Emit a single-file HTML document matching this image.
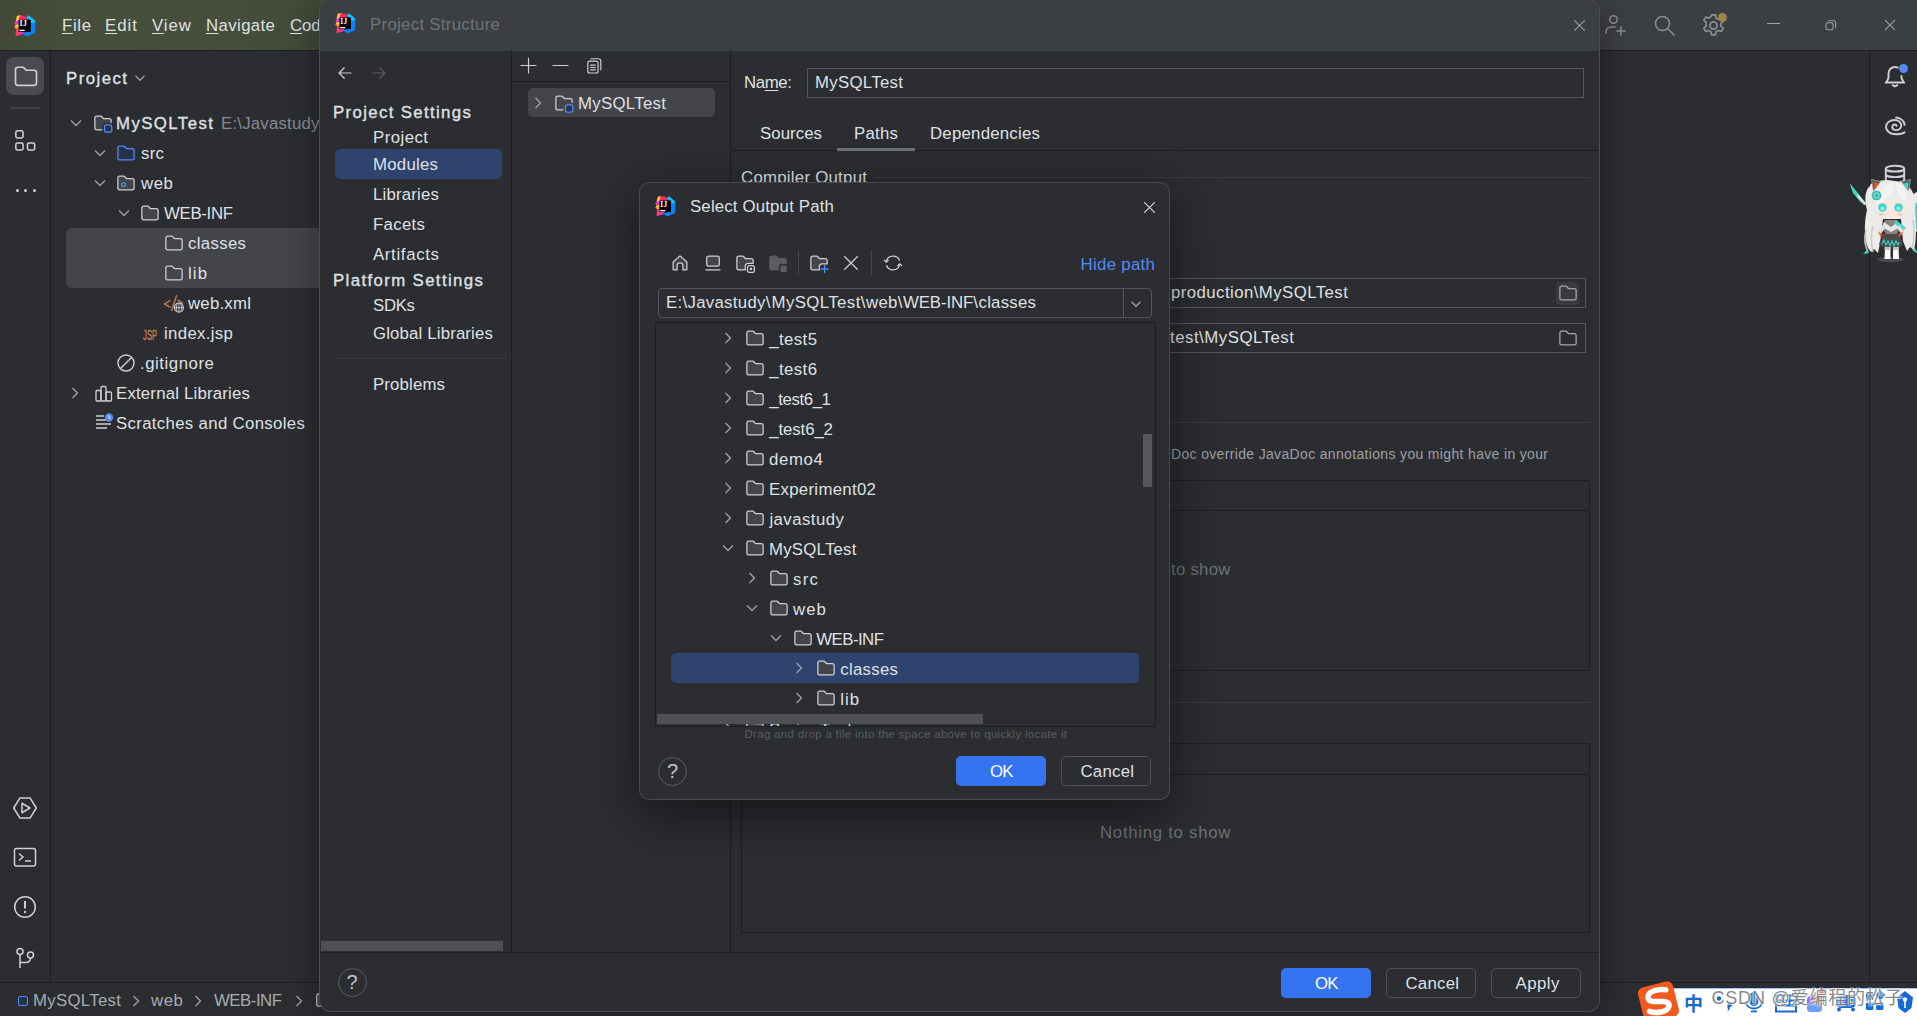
<!DOCTYPE html>
<html><head><meta charset="utf-8"><title>Project Structure</title>
<style>
html,body{margin:0;padding:0;background:#2b2d30;}
body{width:1917px;height:1016px;position:relative;overflow:hidden;font-family:"Liberation Sans","Noto Sans CJK SC",sans-serif;}
.t{position:absolute;white-space:nowrap;line-height:20px;}
.b{position:absolute;box-sizing:border-box;}
.i{position:absolute;overflow:visible;}
u{text-decoration-thickness:1px;text-underline-offset:2px;}
</style></head><body>
<svg width="0" height="0" style="position:absolute"><defs>
<path id="fold" d="M1.5 4C1.5 3.17 2.17 2.5 3 2.5H6.3c.13 0 .26.05.35.15L8.35 4.35c.1.1.22.15.35.15H13c.83 0 1.5.67 1.5 1.5v6c0 .83-.67 1.5-1.5 1.5H3c-.83 0-1.5-.67-1.5-1.5V4Z"/>
<g id="folder"><use href="#fold" fill="#43454a" stroke="#ced0d6"/></g>
<g id="folderSel"><use href="#fold" fill="#43454a" stroke="#ced0d6"/></g>
<g id="folderSrc"><use href="#fold" fill="#25324d" stroke="#548af7"/></g>
<g id="folderWeb"><use href="#fold" fill="#43454a" stroke="#ced0d6"/><circle cx="6" cy="9.3" r="1.5" fill="none" stroke="#548af7"/></g>
<g id="folderMod"><path d="M7.6 13.5H3c-.83 0-1.5-.67-1.5-1.5V4C1.5 3.17 2.17 2.5 3 2.5H6.3c.13 0 .26.05.35.15L8.35 4.35c.1.1.22.15.35.15H13c.83 0 1.5.67 1.5 1.5v1.900H9.600c-1.100 0-2 .9-2 2Z" fill="#43454a" stroke="none"/><path d="M7.400 13.5H3c-.83 0-1.5-.67-1.5-1.5V4C1.5 3.17 2.17 2.5 3 2.5H6.3c.13 0 .26.05.35.15L8.35 4.35c.1.1.22.15.35.15H13c.83 0 1.5.67 1.5 1.500v1.700" fill="none" stroke="#ced0d6"/><rect x="9.200" y="9.500" width="5.800" height="5.800" rx="1.500" fill="#25324d" stroke="#548af7"/></g>
<g id="folderPlain"><use href="#fold" fill="none" stroke="#a4a7ad"/></g>
<g id="chevD"><path d="M4 6l4 4 4-4" fill="none" stroke="#9da0a8" stroke-width="1.1"/></g>
<g id="chevR"><path d="M6 4l4 4-4 4" fill="none" stroke="#9da0a8" stroke-width="1.1"/></g>
</defs></svg>
<div class="b" style="left:0px;top:0px;width:1917px;height:50px;background:linear-gradient(90deg,#414838 0px,#464e3a 70px,#474f3b 200px,#424939 320px,#3c3f41 700px);"></div>
<div class="b" style="left:0px;top:50px;width:1917px;height:1px;background:#1e1f22;"></div>
<div class="b" style="left:50px;top:51px;width:1px;height:932px;background:#1e1f22;"></div>
<div class="b" style="left:1869px;top:51px;width:1px;height:932px;background:#1e1f22;"></div>
<div class="b" style="left:0px;top:982px;width:1917px;height:1px;background:#1e1f22;"></div>
<svg class="i" style="left:14px;top:14.5px" width="21.5" height="21.5" viewBox="0 0 20.5 20.5">
<polygon points="1.5,6.5 2.8,0.6 6.8,0.3 6.2,5.5" fill="#ffcb2e"/>
<polygon points="5.6,0.4 10.2,0.6 12.6,3.6 11,5.5 5,5.5 4.8,2.5" fill="#fe2a64"/>
<polygon points="0.1,7.6 4.6,4.6 5.2,9.6 1.8,9.6" fill="#f831cf"/>
<polygon points="0.2,11.6 2,9.3 5.2,9.4 5.2,14.2 2.3,13.6" fill="#ff9a10"/>
<polygon points="1.4,9.6 4.800,9.4 4.800,11.2 1,11" fill="#ffdd00"/>
<polygon points="2.3,13 5,13 9.500,15.800 8.600,18 1.400,20.200" fill="#ff3f74"/>
<polygon points="5.500,16 9.500,15.500 8.500,18.200 5.500,18.800" fill="#f02cc8"/>
<polygon points="11.800,2.600 13.700,0.300 20.500,5.800 20.100,17 12.200,20.500 7.900,17.300 15.500,15.500 15.500,4.500" fill="#0b82fb"/>
<polygon points="13.700,0.300 20.500,5.800 17.500,8 11.800,2.600" fill="#12c6f5"/>
<rect x="4.4" y="4.5" width="11.600" height="11.600" fill="#000"/>
<rect x="5.200" y="14" width="5" height="1.300" fill="#fff"/>
<text x="5.300" y="10.500" font-family="Liberation Serif,serif" font-weight="bold" font-size="7.400" fill="#fff" letter-spacing="0.300">IJ</text>
</svg>
<span class="t" style="left:62.00px;top:16.00px;font-size:16.8px;color:#dfe1e5;letter-spacing:0.646px;"><u>F</u>ile</span>
<span class="t" style="left:105.00px;top:16.00px;font-size:16.8px;color:#dfe1e5;letter-spacing:1.021px;"><u>E</u>dit</span>
<span class="t" style="left:152.00px;top:16.00px;font-size:16.8px;color:#dfe1e5;letter-spacing:0.953px;"><u>V</u>iew</span>
<span class="t" style="left:206.00px;top:16.00px;font-size:16.8px;color:#dfe1e5;letter-spacing:0.386px;"><u>N</u>avigate</span>
<span class="t" style="left:290.00px;top:16.00px;font-size:16.8px;color:#dfe1e5;letter-spacing:-0.052px;"><u>C</u>ode</span>
<div class="b" style="left:6px;top:57px;width:38px;height:38px;background:#494b50;border-radius:8px;"></div>
<svg class="i" style="left:11.500px;top:62px" width="28" height="28" viewBox="0 0 24 24"><path d="M3 6.5C3 5.4 3.9 4.5 5 4.5H9.3c.3 0 .5.1.7.3l2 2c.2.2.4.3.7.3H19c1.1 0 2 .9 2 2V18c0 1.1-.9 2-2 2H5c-1.1 0-2-.9-2-2V6.5Z" fill="none" stroke="#ced0d6" stroke-width="1.400"/></svg>
<div class="b" style="left:10px;top:107px;width:30px;height:2px;background:#3f4145;"></div>
<svg class="i" style="left:12.200px;top:127.500px" width="26.500" height="26.500" viewBox="0 0 24 24" fill="none" stroke="#ced0d6" stroke-width="1.400"><rect x="3.5" y="2.5" width="6.5" height="6.5" rx="1.5"/><rect x="3.5" y="13.5" width="6.5" height="6.5" rx="1.5"/><rect x="14" y="13.5" width="6.5" height="6.5" rx="1.5"/></svg>
<div class="b" style="left:15.5px;top:188.5px;width:3px;height:3px;background:#ced0d6;border-radius:50%;"></div>
<div class="b" style="left:24.0px;top:188.5px;width:3px;height:3px;background:#ced0d6;border-radius:50%;"></div>
<div class="b" style="left:32.5px;top:188.5px;width:3px;height:3px;background:#ced0d6;border-radius:50%;"></div>
<svg class="i" style="left:12px;top:794.500px" width="26" height="26" viewBox="0 0 24 24" fill="none" stroke="#ced0d6" stroke-width="1.400" stroke-linejoin="round"><path d="M7.200 2.800h9.600L22.400 12l-5.600 9.200H7.200L1.600 12Z"/><path d="M9.200 7.600v8.800l7.400-4.400Z"/></svg>
<svg class="i" style="left:13px;top:845px" width="24" height="24" viewBox="0 0 24 24" fill="none" stroke="#ced0d6" stroke-width="1.5"><rect x="1.5" y="3.5" width="21" height="17.500" rx="2"/><path d="M6 8.500l4 3.500-4 3.500M12 16h6"/></svg>
<svg class="i" style="left:13px;top:895px" width="24" height="24" viewBox="0 0 24 24" fill="none" stroke="#ced0d6" stroke-width="1.5"><circle cx="12" cy="12" r="10.3"/><path d="M12 6v7.500" stroke-width="2"/><circle cx="12" cy="17" r="1.2" fill="#ced0d6" stroke="none"/></svg>
<svg class="i" style="left:13px;top:945.500px" width="24" height="24" viewBox="0 0 24 24" fill="none" stroke="#ced0d6" stroke-width="1.5"><circle cx="7" cy="5.500" r="3"/><circle cx="17.5" cy="9" r="3"/><path d="M7 8.500V22M7 16.500h5c3 0 5.500-1.500 5.500-4.500"/></svg>
<span class="t" style="left:66.00px;top:69.00px;font-size:16.8px;color:#dfe1e5;letter-spacing:1.453px;-webkit-text-stroke:0.36px #dfe1e5;">Project</span>
<svg class="i" style="left:131.00px;top:68.50px;" width="18" height="18" viewBox="0 0 16 16"><use href="#chevD"/></svg>
<div class="b" style="left:66px;top:228px;width:260px;height:60px;background:#43454a;border-radius:6px;"></div>
<svg class="i" style="left:66.00px;top:113.00px;" width="20" height="20" viewBox="0 0 16 16"><use href="#chevD"/></svg>
<svg class="i" style="left:92.80px;top:113.00px;" width="20" height="20" viewBox="0 0 16 16"><use href="#folderMod"/></svg>
<span class="t" style="left:116.00px;top:114.00px;font-size:16.8px;color:#dfe1e5;letter-spacing:1.430px;-webkit-text-stroke:0.36px #dfe1e5;">MySQLTest</span>
<span class="t" style="left:221.00px;top:114.00px;font-size:16.8px;color:#868a91;letter-spacing:0.213px;">E:\Javastudy</span>
<svg class="i" style="left:90.00px;top:143.00px;" width="20" height="20" viewBox="0 0 16 16"><use href="#chevD"/></svg>
<svg class="i" style="left:116.00px;top:143.00px;" width="20" height="20" viewBox="0 0 16 16"><use href="#folderSrc"/></svg>
<span class="t" style="left:141.00px;top:144.00px;font-size:16.8px;color:#dfe1e5;letter-spacing:0.305px;">src</span>
<svg class="i" style="left:90.00px;top:173.00px;" width="20" height="20" viewBox="0 0 16 16"><use href="#chevD"/></svg>
<svg class="i" style="left:116.00px;top:173.00px;" width="20" height="20" viewBox="0 0 16 16"><use href="#folderWeb"/></svg>
<span class="t" style="left:141.03px;top:174.00px;font-size:16.8px;color:#dfe1e5;letter-spacing:0.578px;">web</span>
<svg class="i" style="left:114.00px;top:203.00px;" width="20" height="20" viewBox="0 0 16 16"><use href="#chevD"/></svg>
<svg class="i" style="left:140.00px;top:203.00px;" width="20" height="20" viewBox="0 0 16 16"><use href="#folder"/></svg>
<span class="t" style="left:164.00px;top:204.00px;font-size:16.8px;color:#dfe1e5;letter-spacing:-0.318px;">WEB-INF</span>
<svg class="i" style="left:164.00px;top:233.00px;" width="20" height="20" viewBox="0 0 16 16"><use href="#folder"/></svg>
<span class="t" style="left:188.00px;top:234.00px;font-size:16.8px;color:#dfe1e5;letter-spacing:0.331px;">classes</span>
<svg class="i" style="left:164.00px;top:263.00px;" width="20" height="20" viewBox="0 0 16 16"><use href="#folder"/></svg>
<span class="t" style="left:188.00px;top:264.00px;font-size:16.8px;color:#dfe1e5;letter-spacing:1.094px;">lib</span>
<span class="t" style="left:188.03px;top:294.00px;font-size:16.8px;color:#dfe1e5;letter-spacing:0.227px;">web.xml</span>
<span class="t" style="left:164.00px;top:324.00px;font-size:16.8px;color:#dfe1e5;letter-spacing:0.338px;">index.jsp</span>
<span class="t" style="left:140.00px;top:354.00px;font-size:16.8px;color:#dfe1e5;letter-spacing:0.545px;">.gitignore</span>
<svg class="i" style="left:65.00px;top:383.00px;" width="20" height="20" viewBox="0 0 16 16"><use href="#chevR"/></svg>
<span class="t" style="left:116.00px;top:384.00px;font-size:16.8px;color:#dfe1e5;letter-spacing:0.194px;">External Libraries</span>
<span class="t" style="left:116.00px;top:414.00px;font-size:16.8px;color:#dfe1e5;letter-spacing:0.330px;">Scratches and Consoles</span>
<svg class="i" style="left:163px;top:293px" width="22" height="22" viewBox="0 0 22 22" fill="none"><path d="M7.300 7.300L1.600 10.900l5.700 3.500M8.500 17.700L13.700 2.200M14.500 6.800L20 10.300" stroke="#c77d55" stroke-width="1.400"/><circle cx="15.900" cy="14.700" r="4.500" fill="#2b2d30" stroke="#ced0d6" stroke-width="1.200"/><path d="M11.500 14.700h8.800M15.900 10.300v8.800M14 10.800c-.9 2.400-.9 5.400 0 7.800M17.800 10.800c.9 2.400.9 5.400 0 7.800" stroke="#ced0d6" stroke-width="0.900"/></svg>
<span class="t" style="left:142.800px;top:325px;font-size:15.5px;color:#c77d55;letter-spacing:0px;transform:scaleX(0.50);transform-origin:0 0;-webkit-text-stroke:0.350px #c77d55;">JSP</span>
<svg class="i" style="left:116px;top:353px" width="20" height="20" viewBox="0 0 20 20" fill="none" stroke="#ced0d6" stroke-width="1.4"><circle cx="10" cy="10" r="8"/><path d="M4.500 15.500L15.500 4.500"/></svg>
<svg class="i" style="left:93.700px;top:383.500px" width="20" height="20" viewBox="0 0 20 20" fill="none" stroke="#ced0d6" stroke-width="1.3"><rect x="2" y="6.500" width="5" height="10.500" rx="1"/><rect x="7" y="2.500" width="5" height="14.500" rx="1"/><rect x="12" y="8" width="5.500" height="9" rx="1"/></svg>
<svg class="i" style="left:93.700px;top:412.300px" width="20" height="20" viewBox="0 0 20 20" fill="none" stroke="#ced0d6" stroke-width="1.3"><path d="M2 5.500h8M2 9.500h11M2 13.500h15M2 17.500h11" transform="translate(0 -1.500)"/><circle cx="15" cy="5.500" r="4.200" fill="#548af7" stroke="none"/><path d="M15 3.200v2.600l1.600 1" stroke="#fff" stroke-width="1"/></svg>
<div class="b" style="left:18px;top:996px;width:10px;height:10px;border:1.500px solid #548af7;border-radius:2px;background:#25324d;"></div>
<span class="t" style="left:33.00px;top:991.00px;font-size:16.8px;color:#a8abb2;letter-spacing:0.305px;">MySQLTest</span>
<span class="t" style="left:151.03px;top:991.00px;font-size:16.8px;color:#a8abb2;letter-spacing:0.578px;">web</span>
<span class="t" style="left:214.00px;top:991.00px;font-size:16.8px;color:#a8abb2;letter-spacing:-0.484px;">WEB-INF</span>
<svg class="i" style="left:125.50px;top:990.50px;" width="20" height="20" viewBox="0 0 16 16"><use href="#chevR"/></svg>
<svg class="i" style="left:187.50px;top:990.50px;" width="20" height="20" viewBox="0 0 16 16"><use href="#chevR"/></svg>
<svg class="i" style="left:288.50px;top:990.50px;" width="20" height="20" viewBox="0 0 16 16"><use href="#chevR"/></svg>
<svg class="i" style="left:315.00px;top:991.00px;" width="18" height="18" viewBox="0 0 16 16"><use href="#folder"/></svg>
<svg class="i" style="left:1603.0px;top:13.0px" width="24" height="24" viewBox="0 0 24 24" fill="none" stroke="#8b8e94" stroke-width="1.5" stroke-linecap="round"><circle cx="10.500" cy="6.500" r="3.700"/><path d="M3 20.500v-1.500c0-3 2.500-5 5.500-5h3.500M18 14v8M14 18h8"/></svg>
<svg class="i" style="left:1652.0px;top:13.0px" width="24" height="24" viewBox="0 0 24 24" fill="none" stroke="#8b8e94" stroke-width="1.5" stroke-linecap="round"><circle cx="10.500" cy="10.500" r="7"/><path d="M15.800 15.800L22 22"/></svg>
<svg class="i" style="left:1700.0px;top:11.5px" width="27" height="27" viewBox="0 0 24 24" fill="none" stroke="#8b8e94" stroke-width="1.5" stroke-linecap="round"><circle cx="12" cy="12" r="3.200"/><path d="M10.300 2.500h3.400l.6 2.800 1.900 1.100 2.700-.9 1.700 2.900-2.100 1.900v2.200l2.100 1.900-1.700 2.900-2.700-.9-1.900 1.100-.6 2.800h-3.400l-.6-2.800-1.900-1.100-2.700.9-1.700-2.900 2.100-1.900V9.300L3.400 7.400l1.700-2.900 2.700.9 1.900-1.100Z" stroke-linejoin="round"/></svg>
<div class="b" style="left:1718px;top:13px;width:9px;height:9px;background:#9a8550;border-radius:50%;"></div>
<div class="b" style="left:1767px;top:23px;width:13px;height:1.3px;background:#9da0a8;"></div>
<svg class="i" style="left:1823.0px;top:17.0px" width="16" height="16" viewBox="0 0 24 24" fill="none" stroke="#9da0a8" stroke-width="1.6" stroke-linecap="round"><rect x="4.500" y="8.500" width="10.500" height="10.500" rx="2.500"/><path d="M8.500 5.500h7.500c1.700 0 3 1.300 3 3v7.500"/></svg>
<svg class="i" style="left:1882.0px;top:17.0px" width="16" height="16" viewBox="0 0 24 24" fill="none" stroke="#9da0a8" stroke-width="1.7" stroke-linecap="round"><path d="M5 5l14 14M19 5L5 19"/></svg>
<svg class="i" style="left:1882.0px;top:63.0px" width="26" height="26" viewBox="0 0 24 24" fill="none" stroke="#ced0d6" stroke-width="1.8" stroke-linecap="round"><path d="M14.500 4.200c-.8-.4-1.600-.6-2.500-.6-3.300 0-6 2.700-6 6v4.400l-2.200 4h16.400l-2.200-4v-2"/><path d="M9.800 20.500l2.200 1.200 2.200-1.200" fill="#ced0d6"/></svg>
<div class="b" style="left:1898.5px;top:63.5px;width:9px;height:9px;background:#548af7;border-radius:50%;"></div>
<svg class="i" style="left:1882.0px;top:113.0px" width="26" height="26" viewBox="0 0 24 24" fill="none" stroke="#ced0d6" stroke-width="1.8" stroke-linecap="round"><path d="M13.500 11.800c-.6-1.500-3-1.500-3.800.2-.9 2 1 4 3.800 3.800 3.200-.3 5-3 4-5.800C16.400 6.800 12.300 5.600 8.300 7 4.300 8.500 2.600 12 4.300 15.200c1.900 3.500 6.800 4.800 11.700 4.200 1.800-.2 3.400-.700 4.800-1.500M20.800 11c-.3-3.500-3.300-6.300-7.800-6.800"/></svg>
<svg class="i" style="left:1882.0px;top:163.5px" width="26" height="26" viewBox="0 0 24 24" fill="none" stroke="#ced0d6" stroke-width="1.8" stroke-linecap="round"><ellipse cx="12" cy="4.300" rx="8.500" ry="2.700"/><path d="M3.500 4.300v15.400c0 1.500 3.800 2.700 8.500 2.700s8.500-1.200 8.500-2.700V4.300M3.500 9.400c0 1.500 3.800 2.700 8.500 2.700s8.500-1.200 8.500-2.700M3.500 14.600c0 1.500 3.800 2.700 8.500 2.700s8.500-1.200 8.500-2.700"/></svg>
<div class="b" style="left:320px;top:0px;width:1279px;height:1011px;border-radius:11px;background:#2b2d30;box-shadow:0 0 0 1px #4b4d51,0 6px 36px 0px rgba(0,0,0,0.36);overflow:hidden;"><div class="b" style="left:0;top:0;width:1279px;height:51px;background:#3c3f41;"></div></div>
<svg class="i" style="left:334.5px;top:13px" width="20.5" height="20.5" viewBox="0 0 20.5 20.5">
<polygon points="1.5,6.5 2.8,0.6 6.8,0.3 6.2,5.5" fill="#ffcb2e"/>
<polygon points="5.6,0.4 10.2,0.6 12.6,3.6 11,5.5 5,5.5 4.8,2.5" fill="#fe2a64"/>
<polygon points="0.1,7.6 4.6,4.6 5.2,9.6 1.8,9.6" fill="#f831cf"/>
<polygon points="0.2,11.6 2,9.3 5.2,9.4 5.2,14.2 2.3,13.6" fill="#ff9a10"/>
<polygon points="1.4,9.6 4.800,9.4 4.800,11.2 1,11" fill="#ffdd00"/>
<polygon points="2.3,13 5,13 9.500,15.800 8.600,18 1.400,20.200" fill="#ff3f74"/>
<polygon points="5.500,16 9.500,15.500 8.500,18.200 5.500,18.800" fill="#f02cc8"/>
<polygon points="11.800,2.600 13.700,0.300 20.500,5.800 20.100,17 12.200,20.500 7.900,17.300 15.500,15.500 15.500,4.500" fill="#0b82fb"/>
<polygon points="13.700,0.300 20.500,5.800 17.500,8 11.800,2.600" fill="#12c6f5"/>
<rect x="4.4" y="4.5" width="11.600" height="11.600" fill="#000"/>
<rect x="5.200" y="14" width="5" height="1.300" fill="#fff"/>
<text x="5.300" y="10.500" font-family="Liberation Serif,serif" font-weight="bold" font-size="7.400" fill="#fff" letter-spacing="0.300">IJ</text>
</svg>
<span class="t" style="left:370.00px;top:15.00px;font-size:16.8px;color:#6f737a;letter-spacing:0.307px;">Project Structure</span>
<svg class="i" style="left:1570.5px;top:16.5px" width="17" height="17" viewBox="0 0 24 24" fill="none" stroke="#9da0a8" stroke-width="1.5" stroke-linecap="round"><path d="M5 5l14 14M19 5L5 19"/></svg>
<div class="b" style="left:511px;top:50px;width:1px;height:903px;background:#1e1f22;"></div>
<div class="b" style="left:730px;top:50px;width:1px;height:903px;background:#1e1f22;"></div>
<div class="b" style="left:512px;top:81px;width:218px;height:1px;background:#1e1f22;"></div>
<div class="b" style="left:320px;top:952px;width:1279px;height:1px;background:#1e1f22;"></div>
<div class="b" style="left:321px;top:941px;width:182px;height:10px;background:#4e5054;"></div>
<svg class="i" style="left:336.0px;top:64.0px" width="18" height="18" viewBox="0 0 24 24" fill="none" stroke="#ced0d6" stroke-width="1.6" stroke-linecap="round"><path d="M20 12H4.500M11 5l-7 7 7 7"/></svg>
<svg class="i" style="left:369.5px;top:64.0px" width="18" height="18" viewBox="0 0 24 24" fill="none" stroke="#5a5d63" stroke-width="1.6" stroke-linecap="round"><path d="M4 12h15.500M13 5l7 7-7 7"/></svg>
<span class="t" style="left:333.00px;top:103.00px;font-size:16.8px;color:#dfe1e5;letter-spacing:1.357px;-webkit-text-stroke:0.36px #dfe1e5;">Project Settings</span>
<div class="b" style="left:335px;top:149px;width:167px;height:29.5px;background:#2e436e;border-radius:5px;"></div>
<span class="t" style="left:373.00px;top:128.00px;font-size:16.8px;color:#dfe1e5;letter-spacing:0.453px;">Project</span>
<span class="t" style="left:373.00px;top:155.00px;font-size:16.8px;color:#dfe1e5;letter-spacing:0.253px;">Modules</span>
<span class="t" style="left:373.00px;top:185.00px;font-size:16.8px;color:#dfe1e5;letter-spacing:0.197px;">Libraries</span>
<span class="t" style="left:373.00px;top:215.00px;font-size:16.8px;color:#dfe1e5;letter-spacing:0.319px;">Facets</span>
<span class="t" style="left:373.00px;top:245.00px;font-size:16.8px;color:#dfe1e5;letter-spacing:0.666px;">Artifacts</span>
<span class="t" style="left:333.00px;top:271.00px;font-size:16.8px;color:#dfe1e5;letter-spacing:1.382px;-webkit-text-stroke:0.36px #dfe1e5;">Platform Settings</span>
<span class="t" style="left:373.00px;top:296.00px;font-size:16.8px;color:#dfe1e5;letter-spacing:-0.312px;">SDKs</span>
<span class="t" style="left:373.00px;top:324.00px;font-size:16.8px;color:#dfe1e5;letter-spacing:0.157px;">Global Libraries</span>
<div class="b" style="left:333px;top:358px;width:174px;height:1px;background:#35373b;"></div>
<span class="t" style="left:373.00px;top:375.00px;font-size:16.8px;color:#dfe1e5;letter-spacing:0.152px;">Problems</span>
<svg class="i" style="left:518.7px;top:56.0px" width="19" height="19" viewBox="0 0 24 24" fill="none" stroke="#ced0d6" stroke-width="1.5" stroke-linecap="round"><path d="M12 2.500v19M2.500 12h19"/></svg>
<svg class="i" style="left:550.8px;top:56.0px" width="19" height="19" viewBox="0 0 24 24" fill="none" stroke="#ced0d6" stroke-width="1.5" stroke-linecap="round"><path d="M2.500 12h19"/></svg>
<svg class="i" style="left:584.5px;top:56.0px" width="19" height="19" viewBox="0 0 24 24" fill="none" stroke="#ced0d6" stroke-width="1.5" stroke-linecap="round"><rect x="3.500" y="6.500" width="13" height="15" rx="2.500"/><path d="M7.500 3.500h9.500c1.700 0 3 1.300 3 3v11M7 11.500h6M7 14.500h6M7 17.500h6" stroke-width="1.500"/></svg>
<div class="b" style="left:527.5px;top:87.5px;width:187px;height:29.5px;background:#43454a;border-radius:5px;"></div>
<svg class="i" style="left:527.50px;top:92.50px;" width="20" height="20" viewBox="0 0 16 16"><use href="#chevR"/></svg>
<svg class="i" style="left:553.70px;top:92.50px;" width="20" height="20" viewBox="0 0 16 16"><use href="#folderMod"/></svg>
<span class="t" style="left:578.00px;top:94.00px;font-size:16.8px;color:#dfe1e5;letter-spacing:0.305px;">MySQLTest</span>
<div class="b" style="left:337.5px;top:967.5px;width:29px;height:29px;border:1px solid #5a5d63;border-radius:50%;"></div>
<span class="t" style="left:346.50px;top:972.00px;font-size:20px;color:#c3c5cb;letter-spacing:0.000px;">?</span>
<div class="b" style="left:1281px;top:967.5px;width:90px;height:30px;background:#3574f0;border-radius:5px;"></div>
<div class="b" style="left:1386px;top:967.5px;width:90px;height:30px;border:1px solid #4e5157;border-radius:5px;"></div>
<div class="b" style="left:1491px;top:967.5px;width:90px;height:30px;border:1px solid #4e5157;border-radius:5px;"></div>
<span class="t" style="left:1315.00px;top:974.00px;font-size:16.8px;color:#ffffff;letter-spacing:-0.766px;">OK</span>
<span class="t" style="left:1405.50px;top:974.00px;font-size:16.8px;color:#dfe1e5;letter-spacing:0.244px;">Cancel</span>
<span class="t" style="left:1515.50px;top:974.00px;font-size:16.8px;color:#dfe1e5;letter-spacing:0.496px;">Apply</span>
<span class="t" style="left:744.00px;top:73.00px;font-size:16.8px;color:#dfe1e5;letter-spacing:-0.367px;">Na<u>m</u>e:</span>
<div class="b" style="left:807px;top:67.5px;width:777px;height:30px;border:1px solid #53565c;"></div>
<span class="t" style="left:815.00px;top:73.00px;font-size:16.8px;color:#dfe1e5;letter-spacing:0.305px;">MySQLTest</span>
<span class="t" style="left:760.00px;top:124.00px;font-size:16.8px;color:#dfe1e5;letter-spacing:0.062px;">Sources</span>
<span class="t" style="left:854.00px;top:124.00px;font-size:16.8px;color:#dfe1e5;letter-spacing:0.262px;">Paths</span>
<span class="t" style="left:930.00px;top:124.00px;font-size:16.8px;color:#dfe1e5;letter-spacing:0.237px;">Dependencies</span>
<div class="b" style="left:731px;top:150px;width:867px;height:1px;background:#1e1f22;"></div>
<div class="b" style="left:836.5px;top:147.5px;width:78px;height:3px;background:#6f737a;"></div>
<span class="t" style="left:741.00px;top:168.00px;font-size:16.8px;color:#dfe1e5;letter-spacing:0.265px;">Compiler Output</span>
<div class="b" style="left:875px;top:177px;width:715px;height:1px;background:#393b40;"></div>
<div class="b" style="left:1100px;top:277.5px;width:486px;height:30px;border:1px solid #53565c;"></div>
<div class="b" style="left:1100px;top:322.5px;width:486px;height:30px;border:1px solid #53565c;"></div>
<span class="t" style="left:1171.00px;top:283.00px;font-size:16.8px;color:#dfe1e5;letter-spacing:0.438px;">production\MySQLTest</span>
<span class="t" style="left:1170.00px;top:328.00px;font-size:16.8px;color:#dfe1e5;letter-spacing:0.516px;">test\MySQLTest</span>
<div class="b" style="left:1556px;top:281.5px;width:23px;height:23px;background:#393b40;border-radius:4px;"></div>
<svg class="i" style="left:1557.50px;top:283.00px;" width="20" height="20" viewBox="0 0 16 16"><use href="#folderPlain"/></svg>
<svg class="i" style="left:1557.50px;top:328.00px;" width="20" height="20" viewBox="0 0 16 16"><use href="#folderPlain"/></svg>
<div class="b" style="left:741px;top:422px;width:849px;height:1px;background:#393b40;"></div>
<span class="t" style="left:1171.00px;top:444.00px;font-size:14px;color:#9da0a8;letter-spacing:0.338px;">Doc override JavaDoc annotations you might have in your</span>
<div class="b" style="left:740.5px;top:480px;width:849.5px;height:191px;border:1px solid #1e1f22;"></div>
<div class="b" style="left:741px;top:510px;width:848px;height:1px;background:#1e1f22;"></div>
<span class="t" style="left:1171.00px;top:560.00px;font-size:16.8px;color:#6f737a;letter-spacing:0.263px;">to show</span>
<div class="b" style="left:741px;top:702px;width:849px;height:1px;background:#393b40;"></div>
<div class="b" style="left:740.5px;top:742.5px;width:849.5px;height:190.5px;border:1px solid #1e1f22;"></div>
<div class="b" style="left:741px;top:773.5px;width:848px;height:1px;background:#1e1f22;"></div>
<span class="t" style="left:1100.00px;top:823.00px;font-size:16.8px;color:#6f737a;letter-spacing:0.715px;">Nothing to show</span>
<div class="b" style="left:640px;top:183px;width:529px;height:616px;border-radius:9px;background:#2b2d30;box-shadow:0 0 0 1px #48494d,0 14px 50px 2px rgba(0,0,0,0.48);"></div>
<svg class="i" style="left:654.8px;top:195.7px" width="20.5" height="20.5" viewBox="0 0 20.5 20.5">
<polygon points="1.5,6.5 2.8,0.6 6.8,0.3 6.2,5.5" fill="#ffcb2e"/>
<polygon points="5.6,0.4 10.2,0.6 12.6,3.6 11,5.5 5,5.5 4.8,2.5" fill="#fe2a64"/>
<polygon points="0.1,7.6 4.6,4.6 5.2,9.6 1.8,9.6" fill="#f831cf"/>
<polygon points="0.2,11.6 2,9.3 5.2,9.4 5.2,14.2 2.3,13.6" fill="#ff9a10"/>
<polygon points="1.4,9.6 4.800,9.4 4.800,11.2 1,11" fill="#ffdd00"/>
<polygon points="2.3,13 5,13 9.500,15.800 8.600,18 1.400,20.200" fill="#ff3f74"/>
<polygon points="5.500,16 9.500,15.500 8.500,18.200 5.500,18.800" fill="#f02cc8"/>
<polygon points="11.800,2.600 13.700,0.300 20.500,5.800 20.100,17 12.200,20.500 7.900,17.300 15.500,15.500 15.500,4.500" fill="#0b82fb"/>
<polygon points="13.700,0.300 20.500,5.800 17.500,8 11.800,2.600" fill="#12c6f5"/>
<rect x="4.4" y="4.5" width="11.600" height="11.600" fill="#000"/>
<rect x="5.200" y="14" width="5" height="1.300" fill="#fff"/>
<text x="5.300" y="10.500" font-family="Liberation Serif,serif" font-weight="bold" font-size="7.400" fill="#fff" letter-spacing="0.300">IJ</text>
</svg>
<span class="t" style="left:690.00px;top:197.00px;font-size:16.8px;color:#dfe1e5;letter-spacing:0.176px;">Select Output Path</span>
<svg class="i" style="left:1140.5px;top:198.5px" width="17" height="17" viewBox="0 0 24 24" fill="none" stroke="#dfe1e5" stroke-width="1.5" stroke-linecap="round"><path d="M5 5l14 14M19 5L5 19"/></svg>
<span class="t" style="left:1080.50px;top:255.00px;font-size:16.8px;color:#548af7;letter-spacing:0.324px;">Hide path</span>
<svg class="i" style="left:670px;top:253px" width="20" height="20" viewBox="0 0 16 16" fill="none" stroke="#ced0d6" stroke-width="1"><path d="M2.500 7.200L8 2.300l5.500 4.900V13c0 .3-.2.500-.5.500h-2.700V10c0-1.200-1-2.200-2.300-2.200S5.700 8.800 5.700 10v3.500H3c-.3 0-.5-.2-.5-.5V7.200Z" stroke-linejoin="round" fill="#43454a"/></svg>
<svg class="i" style="left:703px;top:253px" width="20" height="20" viewBox="0 0 16 16" fill="none" stroke="#ced0d6" stroke-width="1"><rect x="3" y="2.500" width="10" height="8" rx="1.500" fill="#43454a"/><path d="M2 13.500h12"/></svg>
<svg class="i" style="left:735px;top:253px" width="20" height="20" viewBox="0 0 16 16" fill="none" stroke="#ced0d6" stroke-width="1"><path d="M8.200 13.500H3c-.83 0-1.500-.67-1.500-1.500V4C1.500 3.170 2.170 2.500 3 2.500H6.300c.13 0 .26.050.35.150L8.350 4.350c.1.100.22.150.35.150H13c.83 0 1.500.67 1.500 1.500v2.200H10.500c-1.300 0-2.300 1-2.300 2.300Z" fill="#43454a"/><rect x="10" y="10" width="5.500" height="5.500" rx="1.500"/><rect x="11.800" y="11.800" width="1.900" height="1.900" fill="#ced0d6" stroke="none"/></svg>
<svg class="i" style="left:768px;top:253px" width="20" height="20" viewBox="0 0 16 16" fill="none" stroke="#ced0d6" stroke-width="1"><path d="M9 13.500H3c-.83 0-1.500-.67-1.500-1.500V4C1.500 3.170 2.170 2.500 3 2.500H6.300c.13 0 .26.050.35.150L8.350 4.350c.1.100.22.150.35.150H13c.83 0 1.500.67 1.500 1.500v3.500H9Z" fill="#5c5d60" stroke="#5c5d60"/><rect x="9.300" y="9.300" width="6.400" height="6.400" rx="1.800" fill="#5c5d60" stroke="#2b2d30" stroke-width="1.200"/></svg>
<div class="b" style="left:798px;top:250px;width:1px;height:25px;background:#43454a;"></div>
<svg class="i" style="left:809px;top:253px" width="20" height="20" viewBox="0 0 16 16" fill="none" stroke="#ced0d6" stroke-width="1"><path d="M8.200 13.500H3c-.83 0-1.500-.67-1.500-1.500V4C1.500 3.170 2.170 2.500 3 2.500H6.300c.13 0 .26.050.35.150L8.350 4.350c.1.100.22.150.35.150H13c.83 0 1.500.67 1.500 1.500v2.700H10.500c-1.300 0-2.300 1-2.300 2.300Z" fill="#43454a"/><path d="M12.500 9.600v6.400M9.300 12.800h6.400" stroke="#548af7" stroke-width="1.100"/></svg>
<svg class="i" style="left:841px;top:253px" width="20" height="20" viewBox="0 0 16 16" fill="none" stroke="#ced0d6" stroke-width="1"><path d="M2.600 2.600l10.800 10.800M13.400 2.600L2.600 13.400"/></svg>
<div class="b" style="left:871px;top:250px;width:1px;height:25px;background:#43454a;"></div>
<svg class="i" style="left:883px;top:253px" width="20" height="20" viewBox="0 0 16 16" fill="none" stroke="#ced0d6" stroke-width="1"><path d="M13.300 6.200C12.500 4 10.400 2.500 8 2.500 5.300 2.500 3.100 4.400 2.600 7M2.700 9.800c.8 2.200 2.900 3.700 5.300 3.700 2.700 0 4.900-1.900 5.400-4.500"/><path d="M.8 5.600L2.600 7.400 4.500 5.700M15.200 10.400L13.400 8.600 11.500 10.300"/></svg>
<div class="b" style="left:658px;top:288px;width:494px;height:30px;border:1px solid #53565c;border-radius:4px;"></div>
<div class="b" style="left:1123px;top:289px;width:1px;height:28px;background:#53565c;"></div>
<svg class="i" style="left:1127.00px;top:295.00px;" width="18" height="18" viewBox="0 0 16 16"><use href="#chevD"/></svg>
<span class="t" style="left:666.00px;top:293.00px;font-size:16.8px;color:#dfe1e5;letter-spacing:0.306px;">E:\Javastudy\</span>
<span class="t" style="left:771.50px;top:293.00px;font-size:16.8px;color:#dfe1e5;letter-spacing:0.418px;">MySQLTest\</span>
<span class="t" style="left:866.03px;top:293.00px;font-size:16.8px;color:#dfe1e5;letter-spacing:0.328px;">web\</span>
<span class="t" style="left:903.00px;top:293.00px;font-size:16.8px;color:#dfe1e5;letter-spacing:-0.083px;">WEB-INF\</span>
<span class="t" style="left:978.50px;top:293.00px;font-size:16.8px;color:#dfe1e5;letter-spacing:0.247px;">classes</span>
<div class="b" style="left:655px;top:322px;width:501px;height:405px;border:1px solid #1e1f22;"></div>
<div class="b" style="left:671px;top:653px;width:468px;height:30px;background:#2e436e;border-radius:5px;"></div>
<svg class="i" style="left:718.00px;top:328.20px;" width="20" height="20" viewBox="0 0 16 16"><use href="#chevR"/></svg>
<svg class="i" style="left:745.00px;top:328.00px;" width="20" height="20" viewBox="0 0 16 16"><use href="#folder"/></svg>
<span class="t" style="left:769.27px;top:330.00px;font-size:16.8px;color:#dfe1e5;letter-spacing:0.397px;">_test5</span>
<svg class="i" style="left:718.00px;top:358.20px;" width="20" height="20" viewBox="0 0 16 16"><use href="#chevR"/></svg>
<svg class="i" style="left:745.00px;top:358.00px;" width="20" height="20" viewBox="0 0 16 16"><use href="#folder"/></svg>
<span class="t" style="left:769.27px;top:360.00px;font-size:16.8px;color:#dfe1e5;letter-spacing:0.397px;">_test6</span>
<svg class="i" style="left:718.00px;top:388.20px;" width="20" height="20" viewBox="0 0 16 16"><use href="#chevR"/></svg>
<svg class="i" style="left:745.00px;top:388.00px;" width="20" height="20" viewBox="0 0 16 16"><use href="#folder"/></svg>
<span class="t" style="left:769.27px;top:390.00px;font-size:16.8px;color:#dfe1e5;letter-spacing:-0.386px;">_test6_1</span>
<svg class="i" style="left:718.00px;top:418.20px;" width="20" height="20" viewBox="0 0 16 16"><use href="#chevR"/></svg>
<svg class="i" style="left:745.00px;top:418.00px;" width="20" height="20" viewBox="0 0 16 16"><use href="#folder"/></svg>
<span class="t" style="left:769.27px;top:420.00px;font-size:16.8px;color:#dfe1e5;letter-spacing:-0.100px;">_test6_2</span>
<svg class="i" style="left:718.00px;top:448.20px;" width="20" height="20" viewBox="0 0 16 16"><use href="#chevR"/></svg>
<svg class="i" style="left:745.00px;top:448.00px;" width="20" height="20" viewBox="0 0 16 16"><use href="#folder"/></svg>
<span class="t" style="left:769.00px;top:450.00px;font-size:16.8px;color:#dfe1e5;letter-spacing:0.660px;">demo4</span>
<svg class="i" style="left:718.00px;top:478.20px;" width="20" height="20" viewBox="0 0 16 16"><use href="#chevR"/></svg>
<svg class="i" style="left:745.00px;top:478.00px;" width="20" height="20" viewBox="0 0 16 16"><use href="#folder"/></svg>
<span class="t" style="left:769.00px;top:480.00px;font-size:16.8px;color:#dfe1e5;letter-spacing:0.305px;">Experiment02</span>
<svg class="i" style="left:718.00px;top:508.20px;" width="20" height="20" viewBox="0 0 16 16"><use href="#chevR"/></svg>
<svg class="i" style="left:745.00px;top:508.00px;" width="20" height="20" viewBox="0 0 16 16"><use href="#folder"/></svg>
<span class="t" style="left:769.42px;top:510.00px;font-size:16.8px;color:#dfe1e5;letter-spacing:0.453px;">javastudy</span>
<svg class="i" style="left:718.00px;top:538.20px;" width="20" height="20" viewBox="0 0 16 16"><use href="#chevD"/></svg>
<svg class="i" style="left:745.00px;top:538.00px;" width="20" height="20" viewBox="0 0 16 16"><use href="#folder"/></svg>
<span class="t" style="left:769.00px;top:540.00px;font-size:16.8px;color:#dfe1e5;letter-spacing:0.242px;">MySQLTest</span>
<svg class="i" style="left:742.00px;top:568.20px;" width="20" height="20" viewBox="0 0 16 16"><use href="#chevR"/></svg>
<svg class="i" style="left:769.00px;top:568.00px;" width="20" height="20" viewBox="0 0 16 16"><use href="#folder"/></svg>
<span class="t" style="left:793.00px;top:570.00px;font-size:16.8px;color:#dfe1e5;letter-spacing:1.305px;">src</span>
<svg class="i" style="left:742.00px;top:598.20px;" width="20" height="20" viewBox="0 0 16 16"><use href="#chevD"/></svg>
<svg class="i" style="left:769.00px;top:598.00px;" width="20" height="20" viewBox="0 0 16 16"><use href="#folder"/></svg>
<span class="t" style="left:793.03px;top:600.00px;font-size:16.8px;color:#dfe1e5;letter-spacing:1.078px;">web</span>
<svg class="i" style="left:766.00px;top:628.20px;" width="20" height="20" viewBox="0 0 16 16"><use href="#chevD"/></svg>
<svg class="i" style="left:793.00px;top:628.00px;" width="20" height="20" viewBox="0 0 16 16"><use href="#folder"/></svg>
<span class="t" style="left:816.30px;top:630.00px;font-size:16.8px;color:#dfe1e5;letter-spacing:-0.534px;">WEB-INF</span>
<svg class="i" style="left:789.40px;top:658.20px;" width="20" height="20" viewBox="0 0 16 16"><use href="#chevR"/></svg>
<svg class="i" style="left:816.30px;top:658.00px;" width="20" height="20" viewBox="0 0 16 16"><use href="#folder"/></svg>
<span class="t" style="left:840.30px;top:660.00px;font-size:16.8px;color:#dfe1e5;letter-spacing:0.281px;">classes</span>
<svg class="i" style="left:789.40px;top:688.20px;" width="20" height="20" viewBox="0 0 16 16"><use href="#chevR"/></svg>
<svg class="i" style="left:816.30px;top:688.00px;" width="20" height="20" viewBox="0 0 16 16"><use href="#folder"/></svg>
<span class="t" style="left:840.30px;top:690.00px;font-size:16.8px;color:#dfe1e5;letter-spacing:0.944px;">lib</span>
<div class="b" style="left:657px;top:714px;width:497px;height:12px;overflow:hidden;"><div style="position:absolute;left:-657px;top:-714px;">
<svg class="i" style="left:718.00px;top:718.20px;" width="20" height="20" viewBox="0 0 16 16"><use href="#chevR"/></svg>
<svg class="i" style="left:745.00px;top:718.00px;" width="20" height="20" viewBox="0 0 16 16"><use href="#folder"/></svg>
<span class="t" style="left:769.00px;top:720.00px;font-size:16.8px;color:#dfe1e5;letter-spacing:0.405px;">SpringTest</span>
</div></div>
<div class="b" style="left:657px;top:714px;width:326px;height:10px;background:#4e5054;"></div>
<div class="b" style="left:1142.5px;top:433.5px;width:9px;height:53px;background:#55575b;"></div>
<span class="t" style="left:744.50px;top:724.00px;font-size:11.5px;color:#5a5d63;letter-spacing:0.298px;">Drag and drop a file into the space above to quickly locate it</span>
<div class="b" style="left:658px;top:756.5px;width:29px;height:29px;border:1px solid #5a5d63;border-radius:50%;"></div>
<span class="t" style="left:667.00px;top:761.00px;font-size:20px;color:#c3c5cb;letter-spacing:0.000px;">?</span>
<div class="b" style="left:956px;top:755.5px;width:90px;height:30px;background:#3574f0;border-radius:5px;"></div>
<div class="b" style="left:1061px;top:755.5px;width:90px;height:30px;border:1px solid #4e5157;border-radius:5px;"></div>
<span class="t" style="left:990.00px;top:762.00px;font-size:16.8px;color:#ffffff;letter-spacing:-0.766px;">OK</span>
<span class="t" style="left:1080.50px;top:762.00px;font-size:16.8px;color:#dfe1e5;letter-spacing:0.244px;">Cancel</span>
<svg class="i" style="left:1837px;top:160px" width="80" height="110" viewBox="0 0 80 110">
<ellipse cx="53.500" cy="99.500" rx="13" ry="2.800" fill="#47494d"/>
<path d="M12.500 23L20 32l9.500 12-5.500-1.500L16 33Z" fill="#3fd9c4"/>
<path d="M21 34l9 10.500-3 .5-7-8Z" fill="#d9dcdc"/>
<path d="M72 36l8-4v40l-7-6-4-14Z" fill="#e9e7e6"/>
<path d="M74 48l6-6v28l-5-8Z" fill="#3fd9c4"/>
<path d="M33 25C40 18.500 62 18.500 72 27c5 5 7 13 6 23 1 14 2 28-1 40l-4-3-3 4-4-10-2-22H46l-3 24-2 10-4-4-3 3-3-4c-4-10-4-26-1-38-3-10-2-20 3-24Z" fill="#ecebea"/>
<path d="M29 70c-2 8-1 16 2 22M76 60c2 10 1 22-1 28M36 66c-2 8-2 18 0 26" stroke="#cfcac8" stroke-width="1.500" fill="none"/>
<path d="M34.500 19.500l9 2-7 9.500Z" fill="#55575b" stroke="#9da0a8" stroke-width="0.800"/><path d="M37 22l5 1.500-4.500 6Z" fill="#f2531b"/>
<path d="M73.500 19.500l-9 2 7 9.500Z" fill="#55575b" stroke="#9da0a8" stroke-width="0.800"/><path d="M71.500 22.500l-5.500 1 4.800 6Z" fill="#35d8cb"/>
<ellipse cx="54" cy="49" rx="14" ry="9.500" fill="#fbe9df"/>
<path d="M38 44c2-12 10-20 20-22-3 4-3 9-1 13-5-1-7 4-10 6-2 2-6 3-9 3Z" fill="#f4f3f2"/>
<path d="M57 22c8 2 13 9 14 20-4-1-7-4-9-8-1-4-3-8-5-12Z" fill="#f4f3f2"/>
<circle cx="45.500" cy="47.500" r="4.300" fill="#3ed6c8"/><circle cx="61.500" cy="47.500" r="4.300" fill="#3ed6c8"/>
<circle cx="45.500" cy="48.500" r="2" fill="#9ff0e8"/><circle cx="61.500" cy="48.500" r="2" fill="#9ff0e8"/>
<ellipse cx="44" cy="54.500" rx="2.600" ry="1.300" fill="#f8c4c0"/><ellipse cx="63" cy="54.500" rx="2.600" ry="1.300" fill="#f8c4c0"/>
<circle cx="39.500" cy="35.500" r="4.800" fill="#2fb9b5"/><circle cx="39.500" cy="35.500" r="2.600" fill="none" stroke="#bdeeed" stroke-width="0.900"/>
<path d="M48 60h12l3 8-4 8H50l-5-8Z" fill="#8c7f7f"/>
<path d="M47 62l7 5 7-5 2 5-9 5-9-5Z" fill="#e6e8ea"/>
<path d="M59 60l10 8-3 3-9-8Z" fill="#3fd9c4"/>
<path d="M40 72l7-8 2 3-6 8ZM68 72l-6-7-2 3 5 7Z" fill="#dedfe0"/>
<path d="M46 74h16l4 10-3 3H45l-3-3Z" fill="#4c4a48"/>
<path d="M45 84l2-4 2 5 2-4 2 5 2-5 2 5 2-5 2 4 1-3" stroke="#37cfc0" stroke-width="1.200" fill="none"/>
<path d="M41 72l5 2-2 3ZM66 72l-5 2 2 3Z" fill="#f2531b"/>
<path d="M48 87h5.500v12H47.500ZM56 87h5.500l.5 12H56Z" fill="#fafafa"/>
<path d="M47.500 87h6v3h-6ZM56 87h6v3h-6Z" fill="#c9c4c4"/>
<path d="M30 90l-4 4 6-1ZM78 88l3 6-6-4Z" fill="#3fd9c4"/>
</svg>
<div class="b" style="left:1666px;top:988px;width:251px;height:28px;background:#ffffff;border-top:1px solid #9cc2f5;"></div>
<svg class="i" style="left:1632px;top:978px" width="52" height="40" viewBox="0 0 52 40">
<g transform="rotate(-14 26 22)"><rect x="8" y="6" width="36" height="36" rx="6" fill="#f25a1d"/>
<path d="M36 14c-6-3-18-3-19 3-1 5 6 6 11 7 5 1 9 3 7 7-3 5-14 4-20 0" fill="none" stroke="#fff" stroke-width="5.500" stroke-linecap="round"/></g></svg>
<span class="t" style="left:1684px;top:994px;font-size:19px;color:#1769d6;font-weight:bold;line-height:22px;">中</span>
<svg class="i" style="left:1710px;top:985.500px" width="207" height="28" viewBox="0 0 207 28" fill="#1769d6" stroke="none">
<circle cx="9" cy="12.500" r="2.200"/><path d="M17.500 18.500a2.400 2.400 0 1 1 2.400 2.400c0 2-1 3.500-2.800 4.500 1-1.200 1.300-2.400.4-3.500Z"/>
<rect x="39.500" y="6" width="9" height="14" rx="4.500"/><path d="M36 15c0 5 3.500 7.500 8 7.500s8-2.500 8-7.500" fill="none" stroke="#1769d6" stroke-width="1.800"/><rect x="41" y="24.500" width="6" height="1.800"/>
<path d="M66 9.500h20v16H66Z" fill="none" stroke="#1769d6" stroke-width="2"/><path d="M66 14.500h20M66 19.500h20M72.500 9.500v10M79.500 9.500v10" stroke="#1769d6" stroke-width="1.800"/>
<rect x="97" y="10" width="15" height="16" rx="4" fill="#8f6cf0"/><rect x="97" y="16" width="15" height="10" rx="4" fill="#5fb0ff" opacity="0.700"/><circle cx="112" cy="5" r="3" fill="#f0483e"/>
<rect x="126" y="9" width="20" height="13" rx="5"/><circle cx="129" cy="23.500" r="2"/><circle cx="143" cy="23.500" r="2"/>
<rect x="156" y="6.500" width="7.500" height="7.500" rx="1.500"/><rect x="156" y="16.500" width="7.500" height="7.500" rx="1.500"/><rect x="166" y="16.500" width="7.500" height="7.500" rx="1.500"/><rect x="166.500" y="5" width="7.500" height="7.500" rx="1.500" transform="rotate(45 170 9)"/>
<path d="M195 5l8 6.500-1.500 10.500-6.500 5-6.500-5L187 11.500Z"/><circle cx="195" cy="13.500" r="2.200" fill="#fff"/><rect x="194.200" y="14" width="1.600" height="8" fill="#fff"/>
</svg>
<span class="t" style="left:1711.500px;top:983.500px;font-size:18px;line-height:28px;color:rgba(118,118,118,.88);letter-spacing:0.800px;text-shadow:1px 1px 0 rgba(255,255,255,.5),-1px -1px 0 rgba(255,255,255,.5),1px -1px 0 rgba(255,255,255,.5),-1px 1px 0 rgba(255,255,255,.5);">CSDN @爱编程的松子</span>
</body></html>
